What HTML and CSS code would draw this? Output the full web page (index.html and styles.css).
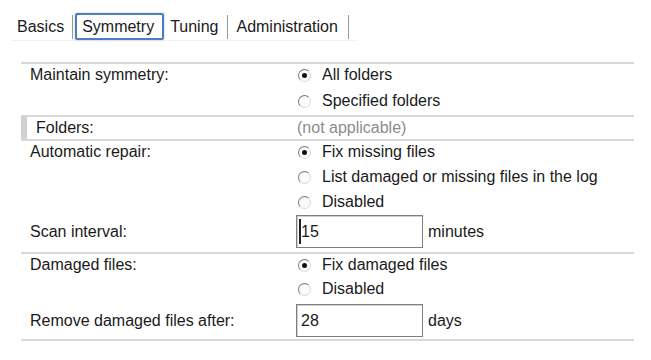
FILE: index.html
```html
<!DOCTYPE html>
<html>
<head>
    <title>Symmetry</title>
    <link rel="stylesheet" href="styles.css">
</head>
<body>

<div class="tabs">
    <span class="tab tab-first">Basics</span>
    <span class="sep"></span>
    <span class="tab tab-active">Symmetry</span>
    <span class="tab tab-tuning">Tuning</span>
    <span class="sep"></span>
    <span class="tab tab-admin">Administration</span>
    <span class="sep"></span>
</div>

<div class="panel">
    <div class="group group-sym">
        <div class="field">
            <div class="label">Maintain symmetry:</div>
            <div class="options gap6">
                <div class="option"><span class="radio checked"></span>All folders</div>
                <div class="option"><span class="radio"></span>Specified folders</div>
            </div>
        </div>
    </div>

    <div class="group group-folders">
        <div class="field">
            <div class="label label-folders">Folders:</div>
            <div class="na">(not applicable)</div>
        </div>
    </div>

    <div class="group group-repair">
        <div class="field">
            <div class="label">Automatic repair:</div>
            <div class="options gap5">
                <div class="option"><span class="radio checked"></span>Fix missing files</div>
                <div class="option"><span class="radio"></span>List damaged or missing files in the log</div>
                <div class="option"><span class="radio"></span>Disabled</div>
            </div>
        </div>
        <div class="field field-input scan">
            <div class="label">Scan interval:</div>
            <div class="box"><span class="caret"></span>15</div>
            <div class="unit">minutes</div>
        </div>
    </div>

    <div class="group group-damaged">
        <div class="field">
            <div class="label">Damaged files:</div>
            <div class="options gap4">
                <div class="option"><span class="radio checked"></span>Fix damaged files</div>
                <div class="option"><span class="radio"></span>Disabled</div>
            </div>
        </div>
        <div class="field field-input remove">
            <div class="label">Remove damaged files after:</div>
            <div class="box">28</div>
            <div class="unit">days</div>
        </div>
    </div>
</div>

</body>
</html>
```

FILE: styles.css
```css
body {
    font-family: "Liberation Sans", Arial, sans-serif;
    font-size: 16px;
    color: #1a1a1a;
    background: #ffffff;
    margin: 0;
    padding: 0;
}
.tabs {
    display: flex;
    align-items: center;
    height: 27px;
    margin: 13px 0 0 12px;
    padding-left: 5px;
    width: 340px;
    border-bottom: 1px solid #f2f2f2;
}
.tab {
    line-height: 22px;
    padding-top: 1px;
}
.tab-first {
    margin-right: 8px;
}
.sep {
    width: 1px;
    height: 24px;
    background: #9a9a9a;
}
.tab-active {
    margin-left: 2px;
    padding: 1px 8px 0 5px;
    height: 22px;
    line-height: 22px;
    border: 2px solid #4d7dbf;
    border-radius: 2px;
    box-shadow: 0 0 2px rgba(77, 125, 191, 0.5);
}
.tab-tuning {
    margin-left: 6px;
    margin-right: 9px;
}
.tab-admin {
    margin-left: 8px;
    margin-right: 10px;
}
.panel {
    margin: 21px 0 0 21px;
    width: 613px;
    border-bottom: 2px solid #d8d8d8;
}
.group {
    border-top: 2px solid #d8d8d8;
}
.group-sym {
    padding-top: 1px;
    padding-bottom: 4px;
}
.group-folders {
    padding-top: 1px;
    padding-bottom: 1px;
    border-left: 6px solid #d0d0d0;
}
.group-repair {
    padding-top: 1px;
    padding-bottom: 4px;
}
.group-damaged {
    padding-top: 1px;
    padding-bottom: 2px;
}
.field {
    display: flex;
    align-items: flex-start;
}
.label {
    width: 266px;
    padding-left: 9px;
    line-height: 20px;
    flex-shrink: 0;
}
.label-folders {
    width: 260px;
    padding-left: 9px;
}
.na {
    color: #8c8c8c;
    line-height: 20px;
    padding-left: 1px;
}
.options {
    display: flex;
    flex-direction: column;
}
.gap6 { gap: 6px; }
.gap5 { gap: 5px; }
.gap4 { gap: 4px; }
.option {
    display: flex;
    align-items: center;
    height: 20px;
    line-height: 20px;
}
.radio {
    position: relative;
    width: 11px;
    height: 11px;
    margin: 0 11px 0 2px;
    border-radius: 50%;
    border: 1px solid;
    border-color: #7a7a7a #dcdcdc #dcdcdc #7a7a7a;
    background: #fafafa;
}
.radio.checked::after {
    content: "";
    position: absolute;
    left: 3px;
    top: 3px;
    width: 5px;
    height: 5px;
    border-radius: 50%;
    background: #111111;
}
.field-input {
    align-items: center;
}
.scan {
    margin-top: 3px;
}
.remove {
    margin-top: 5px;
}
.box {
    display: flex;
    align-items: center;
    width: 121px;
    height: 31px;
    padding-left: 4px;
    border: 1px solid #7f7f7f;
    box-shadow: inset 1px 1px 0 #d0d0d0;
}
.caret {
    width: 2px;
    height: 25px;
    background: #222222;
    margin: 0 0 0 -2px;
}
.unit {
    margin-left: 5px;
}
```
